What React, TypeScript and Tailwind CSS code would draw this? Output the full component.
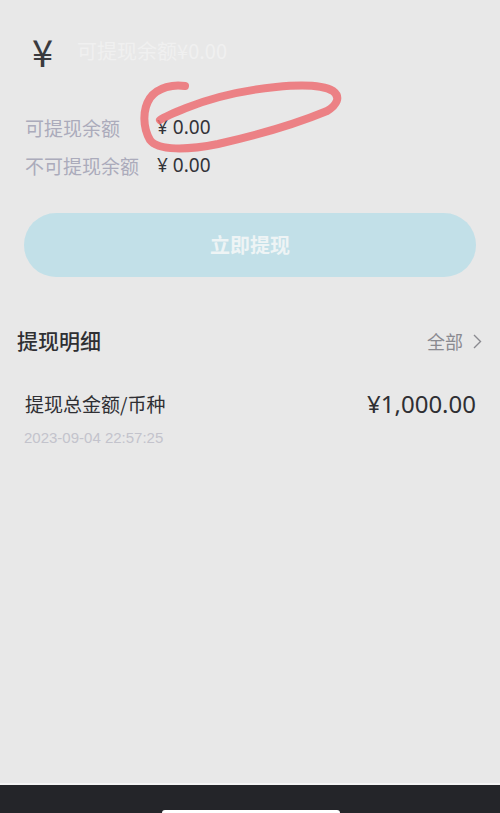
import React from "react";

const font = { fontFamily: '"Noto Sans CJK SC", "Noto Sans", sans-serif' };
const latin = { fontFamily: '"Noto Sans", "Noto Sans CJK SC", sans-serif' };

const Scribble = () => (
  <svg
    className="absolute left-[136px] top-[74px] pointer-events-none"
    width="210"
    height="86"
    viewBox="0 0 210 86"
    fill="none"
  >
    <path
      d="M49 12 C38 10 22 13 14 24 C6 36 7 54 14 66 C22 77 52 76 82 70 C122 61 162 49 191 37 C201 31 205 23 197 17 C185 10 160 11 140 13 C110 16 80 22 50 34 C40 38 30 42 24 46"
      stroke="#ec6f73"
      strokeOpacity="0.85"
      strokeWidth="8"
      strokeLinecap="round"
      strokeLinejoin="round"
    />
  </svg>
);

const App = () => {
  return (
    <div className="w-[500px] h-[813px] bg-[#e8e8e8] flex flex-col overflow-hidden" style={font}>
      <div className="flex-1 relative">
        {/* header */}
        <div className="flex items-center pl-[32px] pt-[26px] h-[76px]">
          <span className="text-[38px] leading-none text-[#3a3a3e]">¥</span>
          <span className="ml-[24px] text-[20px] text-[#f0f0f0] leading-none">可提现余额¥0.00</span>
        </div>

        {/* balances */}
        <div className="px-[25px] mt-[40px] flex flex-col gap-[16px]">
          <div className="flex items-center h-[22px]">
            <span className="w-[132px] text-[19px] text-[#ababbb] leading-none">可提现余额</span>
            <span className="text-[19px] text-[#333338] leading-none" style={latin}>¥ 0.00</span>
          </div>
          <div className="flex items-center h-[22px]">
            <span className="w-[132px] text-[19px] text-[#ababbb] leading-none">不可提现余额</span>
            <span className="text-[19px] text-[#333338] leading-none" style={latin}>¥ 0.00</span>
          </div>
        </div>

        <Scribble />

        {/* button */}
        <div className="px-[24px] mt-[37px]">
          <button className="w-full h-[64px] rounded-full bg-[#c2e0e8] text-[#eef4f5] text-[20px] font-bold">
            立即提现
          </button>
        </div>

        {/* details header */}
        <div className="flex items-center justify-between pl-[17px] pr-[18px] mt-[51px] h-[26px]">
          <span className="text-[21px] font-medium text-[#2f2f33]">提现明细</span>
          <div className="flex items-center gap-[10px] text-[#8a8a90]">
            <span className="text-[18px]">全部</span>
            <svg width="9" height="15" viewBox="0 0 9 15" fill="none">
              <path d="M1 1 L7.5 7.5 L1 14" stroke="#8a8a90" strokeWidth="1.4" />
            </svg>
          </div>
        </div>

        {/* record */}
        <div className="flex items-center justify-between pl-[25px] pr-[24px] mt-[37px] h-[26px]">
          <span className="text-[19px] text-[#2f2f33]">提现总金额/币种</span>
          <span className="text-[24px] text-[#2f2f33]" style={latin}>
            ¥1,000.00
          </span>
        </div>
        <div
          className="pl-[24px] mt-[10px] text-[15px] text-[#c3c3cc]"
          style={{ fontFamily: '"Liberation Sans", Arial, sans-serif' }}
        >
          2023-09-04 22:57:25
        </div>
      </div>

      {/* bottom bar */}
      <div className="h-[30px] bg-[#242529] border-t-[2px] border-[#f4f4f4] relative">
        <div className="absolute left-[162px] bottom-0 w-[178px] h-[3px] bg-white rounded-t-sm" />
      </div>
    </div>
  );
};

export default App;
